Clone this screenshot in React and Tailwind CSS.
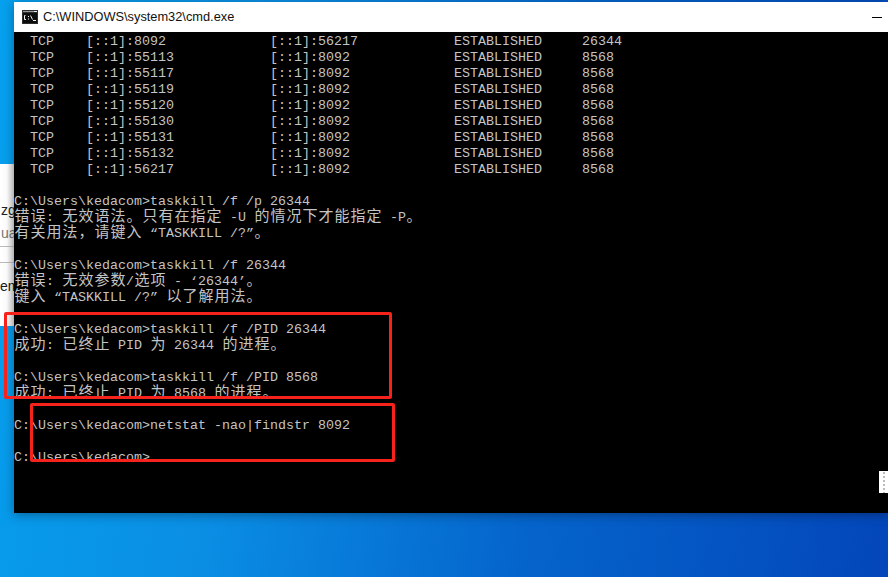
import React from 'react'

const lines = [
  '  TCP    [::1]:8092             [::1]:56217            ESTABLISHED     26344',
  '  TCP    [::1]:55113            [::1]:8092             ESTABLISHED     8568',
  '  TCP    [::1]:55117            [::1]:8092             ESTABLISHED     8568',
  '  TCP    [::1]:55119            [::1]:8092             ESTABLISHED     8568',
  '  TCP    [::1]:55120            [::1]:8092             ESTABLISHED     8568',
  '  TCP    [::1]:55130            [::1]:8092             ESTABLISHED     8568',
  '  TCP    [::1]:55131            [::1]:8092             ESTABLISHED     8568',
  '  TCP    [::1]:55132            [::1]:8092             ESTABLISHED     8568',
  '  TCP    [::1]:56217            [::1]:8092             ESTABLISHED     8568',
  '',
  'C:\\Users\\kedacom>taskkill /f /p 26344',
  '错误: 无效语法。只有在指定 -U 的情况下才能指定 -P。',
  '有关用法\uff0c请键入 “TASKKILL /?”。',
  '',
  'C:\\Users\\kedacom>taskkill /f 26344',
  '错误: 无效参数/选项 - ‘26344’。',
  '键入 “TASKKILL /?” 以了解用法。',
  '',
  'C:\\Users\\kedacom>taskkill /f /PID 26344',
  '成功: 已终止 PID 为 26344 的进程。',
  '',
  'C:\\Users\\kedacom>taskkill /f /PID 8568',
  '成功: 已终止 PID 为 8568 的进程。',
  '',
  'C:\\Users\\kedacom>netstat -nao|findstr 8092',
  '',
  'C:\\Users\\kedacom>',
]

// console cells: latin 8px, CJK 16px
const ConsoleLine = ({ text }) => (
  <div className="h-[16px] whitespace-pre">
    {Array.from(text).map((ch, i) =>
      /[\u3000-\u9fff\uff00-\uffef]/.test(ch) ? (
        <span key={i} className="inline-block w-[16px] text-center text-[15px]">{ch}</span>
      ) : (
        <span key={i}>{ch}</span>
      )
    )}
  </div>
)

const CmdIcon = () => (
  <svg width="16" height="14" viewBox="0 0 16 14" className="mr-[5px] shrink-0">
    <rect x="0" y="0" width="16" height="14" fill="#2e2e2e" />
    <rect x="1" y="3" width="14" height="10" fill="#0c0c0c" />
    <rect x="1" y="1" width="11" height="1" fill="#9a9a9a" />
    <rect x="12" y="1" width="3" height="1" fill="#e8e8e8" />
    <path d="M3.5 5.5h-1v4h1.500M6.500 6v1M6.500 8.500v1M8.500 5.500l2 4M11 10.500h3" stroke="#f0f0f0" strokeWidth="1" fill="none" />
  </svg>
)

const App = () => {
  return (
    <div className="relative w-[888px] h-[577px] overflow-hidden bg-[linear-gradient(100deg,#06a0ee_0%,#0a8ee4_30%,#0565cc_62%,#0346ba_100%)]">
      {/* window behind the console */}
      <div className="absolute left-0 top-[164px] w-[14px] h-[162px] bg-[linear-gradient(90deg,#ffffff_50%,#d8d8d8_100%)] overflow-hidden whitespace-nowrap font-['Liberation_Sans',sans-serif] text-[14px] leading-[16px] text-[#222] flex flex-col">
        <div className="mt-[38px] h-[16px] pl-[1px] -mr-[4px]">zg</div>
        <div className="mt-[7px] h-[16px] pl-[1px] text-[#777] -mr-[4px]">ua</div>
        <div className="mt-[5px] h-px bg-[#bbb]" />
        <div className="mt-[15px] h-px bg-[#bbb]" />
        <div className="mt-[15px] h-[16px] text-[#1a1a1a] -mr-[4px]">em</div>
      </div>

      {/* console window */}
      <div className="absolute left-[14px] top-[2px] w-[874px] h-[511px] flex flex-col shadow-[0_2px_10px_rgba(0,0,0,0.35)]">
        <div className="h-[30px] shrink-0 bg-white flex items-center pl-[8px]">
          <CmdIcon />
          <span className="font-['Liberation_Sans',sans-serif] text-[12.8px] text-[#111] leading-none">C:\WINDOWS\system32\cmd.exe</span>
          <div className="ml-auto mr-[6px] w-[10px] h-px bg-black" />
        </div>
        <div className="relative flex-1 bg-black overflow-hidden">
          <div className="font-['Liberation_Mono','Noto_Sans_CJK_SC',monospace] text-[13.333px] leading-[16px] text-[#c4c4c4] pt-[2px]">
            {lines.map((line, i) => (
              <ConsoleLine key={i} text={line} />
            ))}
          </div>
          {/* scrollbar sliver */}
          <div className="absolute right-0 top-[439px] w-[9px] h-[22px] bg-white flex flex-col gap-[2px] items-center overflow-hidden pt-[1px] pl-px">
            {[0, 1, 2, 3, 4, 5].map((n) => (
              <div key={n} className="w-[2px] h-[2px] shrink-0 bg-[#bdbdbd]" />
            ))}
          </div>
        </div>
      </div>

      {/* red annotations */}
      <div className="absolute left-[4px] top-[312px] w-[388px] h-[87px] border-[3px] border-[#f5231c] rounded-[2px]" />
      <div className="absolute left-[30px] top-[403px] w-[365px] h-[59px] border-[3px] border-[#f5231c] rounded-[2px]" />
    </div>
  )
}

export default App
